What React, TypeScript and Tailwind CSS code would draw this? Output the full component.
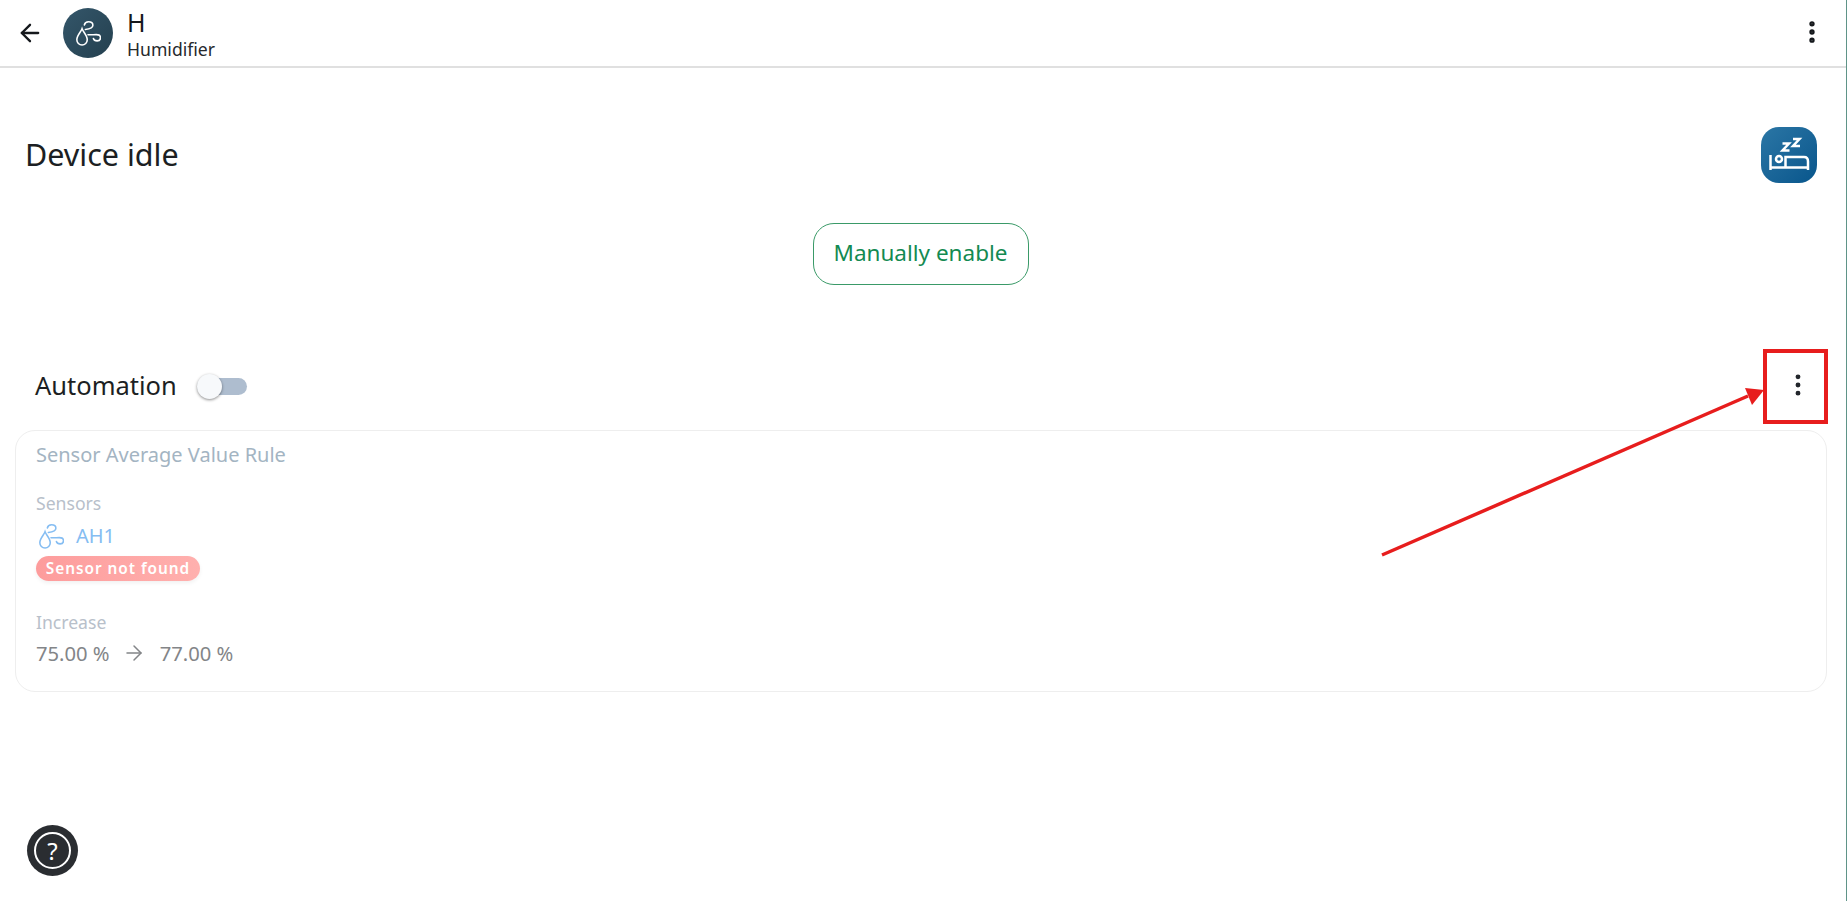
import { ArrowLeft, ArrowRight, EllipsisVertical } from "lucide-react";

function HumidifierIcon({ className }: { className?: string }) {
  return (
    <svg viewBox="0 0 24 24" fill="none" stroke="currentColor" strokeWidth="1.500" strokeLinecap="round" className={className}>
      <path d="M5.800 7.500C4.800 10.500.8 13.800.8 18a5 5 0 0 0 10 0C10.800 13.800 6.800 10.500 5.800 7.500Z" />
      <path d="M8 3.800C8.500 1.800 10.200.8 12 .8c2.400 0 4.200 1.400 4.200 3.300 0 2.500-3 3.600-7.200 4.100" />
      <path d="M11.500 13.200c2.800.2 5.400-.1 8-.1 2.500 0 4 1.200 4 3 0 1.800-1.400 3-3.200 3-1.700 0-3.200-.8-3.600-2.300" />
    </svg>
  );
}

function SleepBadge() {
  return (
    <div className="flex h-14 w-14 items-center justify-center rounded-[18px] bg-gradient-to-br from-[#2a76a5] to-[#07568c]">
      <svg viewBox="0 0 56 56" fill="none" stroke="white" strokeWidth="2.500" className="h-14 w-14">
        <path d="M21.500 16.500h6.500l-6.500 7h7M32 12h6.500l-6.500 7h7" />
        <path d="M9.500 28v15M9.500 40.500H47M47 43v-8.500c0-3-1.500-4.500-4-4.500H24.500v10.500" />
        <circle cx="18" cy="32" r="3" />
      </svg>
    </div>
  );
}

// annotation drawn over the screenshot
function Annotation() {
  return (
    <svg className="pointer-events-none absolute left-0 top-0 h-[901px] w-[1847px]" viewBox="0 0 1847 901" fill="none">
      <rect x="1765" y="351" width="61" height="71" stroke="#e71d1d" strokeWidth="4" />
      <path d="M1382 555 L1748 396" stroke="#e71d1d" strokeWidth="3.500" />
      <path d="M1764 390 L1745 388 L1752 405 Z" fill="#e71d1d" />
    </svg>
  );
}

export default function App() {
  return (
    <div className="relative h-[901px] w-[1847px] overflow-hidden border-r border-[#5f9488] bg-white font-['Noto_Sans',sans-serif] text-[#15181c]">
      <header className="flex h-[68px] items-center border-b-2 border-[#e0e0e0] pl-[16px] pr-[20px]">
        <ArrowLeft className="h-[28px] w-[28px]" strokeWidth={2} />
        <div className="ml-[19px] flex h-[50px] w-[50px] items-center justify-center rounded-full bg-gradient-to-br from-[#34566a] to-[#24404f] text-white">
          <HumidifierIcon className="h-[25px] w-[25px]" />
        </div>
        <div className="ml-[14px] flex flex-col pt-[1px]">
          <span className="text-[25px] leading-[30px]">H</span>
          <span className="text-[17.600px] leading-[24px] text-[#26292c]">Humidifier</span>
        </div>
        <EllipsisVertical className="-mt-[3px] ml-auto h-[28px] w-[28px]" strokeWidth={2.6} />
      </header>

      <section className="flex items-center justify-between pl-[25px] pr-[29px] pt-[59px]">
        <h1 className="-mt-[2px] text-[30.500px] font-normal leading-[56px] text-[#1c1f23]">Device idle</h1>
        <SleepBadge />
      </section>

      <div className="mt-[40px] flex justify-center pr-[5px]">
        <button className="flex h-[62px] w-[216px] items-center justify-center rounded-[21px] border border-[#3a9a68] pb-[2px] text-[22.500px] text-[#138a52]">
          Manually enable
        </button>
      </div>

      <section className="mt-[66px] flex h-[70px] items-center justify-between pl-[35px] pr-[34px]">
        <div className="flex items-center gap-[20px]">
          <span className="-mt-[2px] text-[25.500px] text-[#1c1f23]">Automation</span>
          <div className="relative h-[17px] w-[50px] rounded-full bg-[#aebdcf]">
            <div className="absolute -top-[4px] left-0 h-[25px] w-[25px] rounded-full bg-[#f7f9fb] shadow-[0_1px_3px_rgba(0,0,0,0.45)]" />
          </div>
        </div>
        <EllipsisVertical className="-mt-[3px] h-[28px] w-[28px] text-[#22262b]" strokeWidth={2.2} />
      </section>

      <section className="ml-[15px] mt-[9px] h-[262px] w-[1812px] rounded-[20px] border border-[#eeeeee] pl-[20px] pt-[10px]">
        <div className="text-[20px] leading-[28px] text-[#a3b4c2]">Sensor Average Value Rule</div>
        <div className="mt-[22px] text-[17.600px] leading-[24px] text-[#b8c0ca]">Sensors</div>
        <div className="mt-[7px] flex items-center gap-[12px] text-[#85bdf2]">
          <HumidifierIcon className="ml-[3px] h-[25px] w-[25px]" />
          <span className="text-[20px] leading-[28px]">AH1</span>
        </div>
        <div className="mt-[6px] flex h-[25px] w-[164px] items-center justify-center rounded-full bg-gradient-to-r from-[#fd9c9c] to-[#ffb0ae] text-[15.400px] font-semibold tracking-[0.95px] text-white shadow-[0_2px_4px_rgba(0,0,0,0.06)]">
          Sensor not found
        </div>
        <div className="mt-[29px] text-[17.600px] leading-[24px] text-[#b8c0ca]">Increase</div>
        <div className="mt-[5px] flex items-center text-[20.200px] leading-[28px] text-[#838588]">
          <span>75.00 %</span>
          <ArrowRight className="ml-[12px] h-[24px] w-[24px]" strokeWidth={1.500} />
          <span className="ml-[14px]">77.00 %</span>
        </div>
      </section>

      <button className="absolute left-[27px] top-[825px] flex h-[51px] w-[51px] items-center justify-center rounded-full bg-[#2a2d31]">
        <span className="flex h-[37px] w-[37px] items-center justify-center rounded-full border-2 border-white text-[24px] leading-none text-white">?</span>
      </button>

      <Annotation />
    </div>
  );
}
